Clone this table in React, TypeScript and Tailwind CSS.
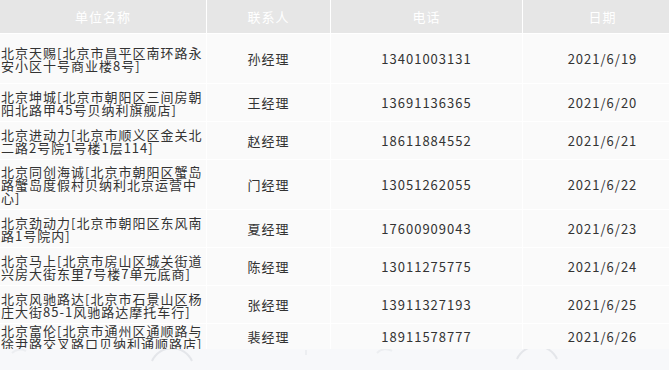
import React from "react";

type Row = {
  name: string[];
  contact: string;
  phone: string;
  date: string;
  h: string;
};

const rows: Row[] = [
  { name: ["北京天赐[北京市昌平区南环路永", "安小区十号商业楼8号]"], contact: "孙经理", phone: "13401003131", date: "2021/6/19", h: "h-[49px]" },
  { name: ["北京坤城[北京市朝阳区三间房朝", "阳北路甲45号贝纳利旗舰店]"], contact: "王经理", phone: "13691136365", date: "2021/6/20", h: "h-[37px]" },
  { name: ["北京进动力[北京市顺义区金关北", "二路2号院1号楼1层114]"], contact: "赵经理", phone: "18611884552", date: "2021/6/21", h: "h-[37px]" },
  { name: ["北京同创海诚[北京市朝阳区蟹岛", "路蟹岛度假村贝纳利北京运营中", "心]"], contact: "门经理", phone: "13051262055", date: "2021/6/22", h: "h-[49px]" },
  { name: ["北京劲动力[北京市朝阳区东风南", "路1号院内]"], contact: "夏经理", phone: "17600909043", date: "2021/6/23", h: "h-[37px]" },
  { name: ["北京马上[北京市房山区城关街道", "兴房大街东里7号楼7单元底商]"], contact: "陈经理", phone: "13011275775", date: "2021/6/24", h: "h-[37px]" },
  { name: ["北京风驰路达[北京市石景山区杨", "庄大街85-1风驰路达摩托车行]"], contact: "张经理", phone: "13911327193", date: "2021/6/25", h: "h-[37px]" },
  { name: ["北京富伦[北京市通州区通顺路与", "徐尹路交叉路口贝纳利通顺路店]"], contact: "裴经理", phone: "18911578777", date: "2021/6/26", h: "h-[24px]" },
];

const cols = "grid grid-cols-[206px_123px_191px_159px] gap-x-[1px]";

export default function App() {
  return (
    <div
      className="relative w-[669px] h-[370px] overflow-hidden bg-[#f7f8fa] text-[13px] tracking-[1px] text-[#333]"
      style={{ fontFamily: '"Noto Sans CJK SC", "Noto Sans", sans-serif' }}
    >
      {/* table */}
      <div className="w-[683px] h-[349px] overflow-hidden bg-white flex flex-col gap-y-[1px]">
        <div className={`${cols} h-[33px] shrink-0`}>
          {["单位名称", "联系人", "电话", "日期"].map((t) => (
            <div key={t} className="bg-[#e6e6e6] text-white flex items-center justify-center">
              {t}
            </div>
          ))}
        </div>
        {rows.map((r) => (
          <div key={r.phone} className={`${cols} ${r.h} shrink-0`}>
            <div className="bg-[#fafafa] flex flex-col justify-center pl-[1px] leading-[13px] overflow-visible">
              {r.name.map((l) => (
                <span key={l} className="block whitespace-nowrap">{l}</span>
              ))}
            </div>
            <div className="bg-[#fafafa] flex items-center justify-center">{r.contact}</div>
            <div className="bg-[#fafafa] flex items-center justify-center">{r.phone}</div>
            <div className="bg-[#fafafa] flex items-center justify-center">{r.date}</div>
          </div>
        ))}
      </div>

      {/* faint background rings below the table */}
      <svg className="absolute left-0 top-[349px]" width="669" height="21" fill="none">
        <path d="M152 12 A22 22 0 0 1 192 12" stroke="#e4e6ea" strokeWidth="2" />
        <path d="M517 10 A22 22 0 0 1 557 10" stroke="#e4e6ea" strokeWidth="2" />
        <path d="M12 4 A12 12 0 0 1 26 2" stroke="#eceef1" strokeWidth="2" />
        <path d="M377 4 A12 12 0 0 1 392 2" stroke="#eceef1" strokeWidth="2" />
        <path d="M306 1 L306 6" stroke="#eceef1" strokeWidth="2" />
      </svg>
    </div>
  );
}
